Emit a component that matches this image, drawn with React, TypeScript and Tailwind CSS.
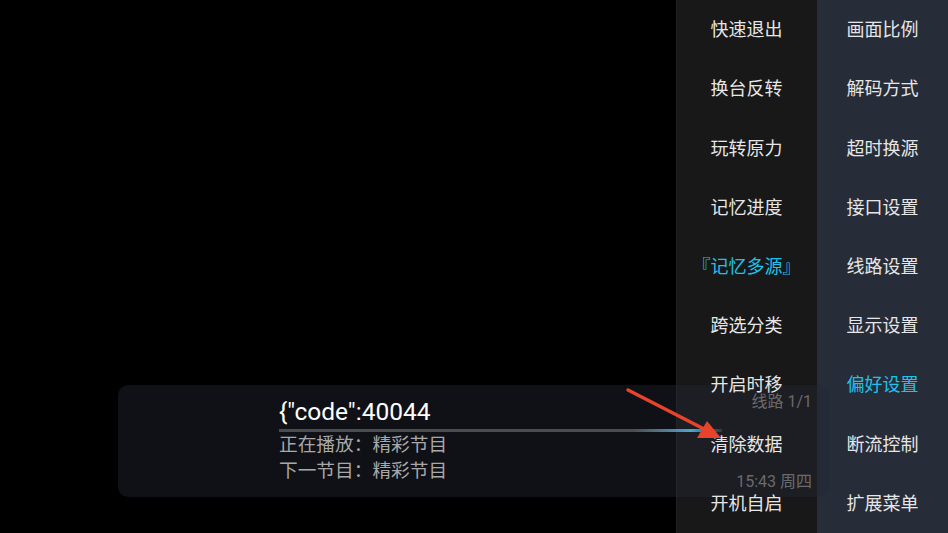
const col1 = ["快速退出", "换台反转", "玩转原力", "记忆进度", "『记忆多源』", "跨选分类", "开启时移", "清除数据", "开机自启"];
const col2 = ["画面比例", "解码方式", "超时换源", "接口设置", "线路设置", "显示设置", "偏好设置", "断流控制", "扩展菜单"];

const font = { fontFamily: "Roboto, 'Noto Sans CJK SC', sans-serif" };

function MenuColumn({ items, active, className }: { items: string[]; active: number; className: string }) {
  return (
    <div className={`grid grid-rows-9 h-full ${className}`}>
      {items.map((t, i) => (
        <div
          key={i}
          className={`flex items-center justify-center text-[18px] ${i === active ? "text-[#1fc2ea]" : "text-[#e6e6e6]"}`}
        >
          {t}
        </div>
      ))}
    </div>
  );
}

export default function App() {
  return (
    <div className="relative w-[948px] h-[533px] bg-black overflow-hidden" style={font}>
      {/* MENU BACKGROUND */}
      <div className="absolute right-0 top-0 h-full flex">
        <div className="w-px bg-[#222]" />
        <div className="w-[140px] bg-[#181818]" />
        <div className="w-[131px] bg-[#262c38]" />
      </div>

      {/* INFO PANEL */}
      <div className="absolute left-[118px] top-[385px] w-[711px] h-[112px] rounded-[10px] bg-[rgba(36,40,55,0.42)] flex pl-[161px] pr-[17px]">
        <div className="flex flex-col pt-[11px] w-[443px]">
          <div className="text-[24.5px] leading-[31px] text-white">{'{"code":40044'}</div>
          <div className="h-[3px] mt-[2px] bg-gradient-to-r from-[#4a4c50] from-[80%] via-[#4aa6d6] via-[93%] to-[#2a3a48]" />
          <div className="text-[18.7px] leading-[26px] text-[#a8a8a8]">
            <div>正在播放：精彩节目</div>
            <div>下一节目：精彩节目</div>
          </div>
        </div>
        <div className="flex-1 flex flex-col items-end justify-between pt-[6px] pb-[4px] text-[16px] leading-[22px] text-[#6a6a6a]">
          <div>线路 1/1</div>
          <div>15:43 周四</div>
        </div>
      </div>

      {/* MENU TEXT */}
      <div className="absolute right-0 top-0 h-full flex">
        <MenuColumn items={col1} active={4} className="w-[141px]" />
        <MenuColumn items={col2} active={6} className="w-[131px]" />
      </div>

      {/* ARROW */}
      <svg className="absolute left-0 top-0" width="948" height="533">
        <line x1="628" y1="390" x2="706" y2="430" stroke="#e8432b" strokeWidth="3.5" strokeLinecap="round" />
        <polygon points="721,438 697,438 707,421" fill="#e8432b" />
      </svg>
    </div>
  );
}
